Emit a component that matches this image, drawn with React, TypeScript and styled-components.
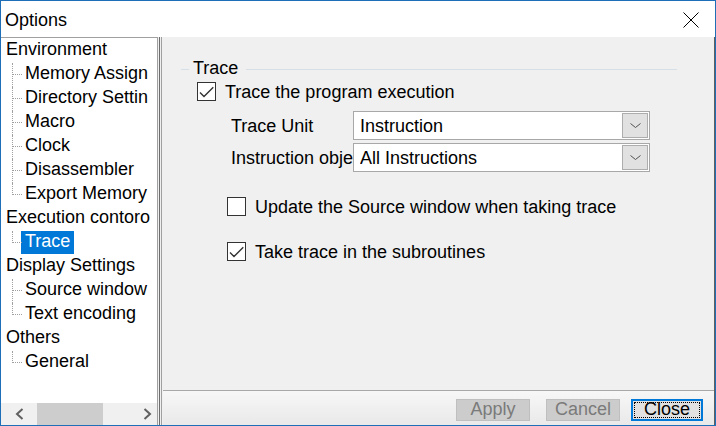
import React from "react";
import styled, { createGlobalStyle } from "styled-components";

const Global = createGlobalStyle`
  html, body { margin: 0; padding: 0; background: #ffffff; }
  body { font-family: "Liberation Sans", Arial, sans-serif; font-size: 18px; color: #000; }
  * { box-sizing: border-box; }
`;

const Window = styled.div`
  width: 716px;
  height: 426px;
  border: 1px solid #1e6fb7;
  display: flex;
  flex-direction: column;
  background: #f0f0f0;
  overflow: hidden;
`;

const TitleBar = styled.div`
  height: 36px;
  flex: none;
  background: #ffffff;
  display: flex;
  align-items: center;
  justify-content: space-between;
  padding: 1px 16px 0 4px;
  line-height: 20px;
`;

const TitleText = styled.span`
  font-size: 18px;
  color: #000;
`;

const Body = styled.div`
  flex: 1;
  display: flex;
  min-height: 0;
`;

const Tree = styled.div`
  width: 157px;
  flex: none;
  background: #ffffff;
  border-top: 1px solid #a0a0a0;
  border-right: 1px solid #a0a0a0;
  display: flex;
  flex-direction: column;
`;

const TreeList = styled.div`
  flex: 1;
  overflow: hidden;
  padding-top: 1px;
`;

const TreeRow = styled.div<{ $child?: boolean; $last?: boolean }>`
  position: relative;
  height: 24px;
  padding-left: ${(p) => (p.$child ? "20px" : "1px")};
  white-space: nowrap;
  overflow: hidden;
  ${(p) =>
    p.$child
      ? `
  &::before {
    content: "";
    position: absolute;
    left: 11px;
    top: 0;
    height: ${p.$last ? "12px" : "24px"};
    border-left: 1px dotted #a0a0a0;
  }
  &::after {
    content: "";
    position: absolute;
    left: 11px;
    top: 11px;
    width: 10px;
    border-top: 1px dotted #a0a0a0;
  }`
      : ""}
`;

const TreeLabel = styled.span<{ $selected?: boolean }>`
  display: inline-block;
  height: 23px;
  line-height: 20px;
  padding: 0 4px 3px 4px;
  background: ${(p) => (p.$selected ? "#0078d7" : "transparent")};
  color: ${(p) => (p.$selected ? "#ffffff" : "#000000")};
`;

const HScroll = styled.div`
  height: 22px;
  flex: none;
  background: #f0f0f0;
  display: grid;
  grid-template-columns: 36px 66px 1fr 20px;
  align-items: stretch;
`;

const ScrollArrow = styled.div`
  display: flex;
  align-items: center;
  justify-content: center;
`;

const ScrollThumb = styled.div`
  background: #cdcdcd;
`;

const Splitter = styled.div`
  width: 5px;
  flex: none;
  background: linear-gradient(
    to right,
    #f0f0f0 0 1px,
    #6d6d6d 1px 2px,
    #f0f0f0 2px 3px,
    #a0a0a0 3px 4px,
    #f0f0f0 4px
  );
`;

const Main = styled.div`
  flex: 1;
  display: flex;
  flex-direction: column;
  border-right: 1px solid #5f5f5f;
  background: #f0f0f0;
`;

const Content = styled.div`
  flex: 1;
  padding: 21px 37px 0 18px;
  display: flex;
  flex-direction: column;
`;

const GroupHeader = styled.div`
  display: flex;
  align-items: flex-start;
  height: 20px;
  line-height: 20px;
`;

const GroupLine = styled.div<{ $grow?: boolean }>`
  margin-top: 11px;
  height: 1px;
  background: #d5dfe5;
  width: ${(p) => (p.$grow ? "auto" : "8px")};
  flex: ${(p) => (p.$grow ? "1" : "none")};
`;

const GroupTitle = styled.span`
  padding: 0 8px 0 4px;
`;

const CheckRow = styled.label<{ $indent: number; $top: number }>`
  display: flex;
  align-items: flex-start;
  gap: 9px;
  height: 20px;
  line-height: 20px;
  margin-left: ${(p) => p.$indent}px;
  margin-top: ${(p) => p.$top}px;
  white-space: nowrap;
`;

const CheckBox = styled.span`
  width: 19px;
  height: 19px;
  flex: none;
  border: 1px solid #333333;
  background: #ffffff;
  display: flex;
  align-items: center;
  justify-content: center;
`;

const FieldGrid = styled.div`
  display: grid;
  grid-template-columns: 122px 297px;
  row-gap: 3px;
  margin-left: 50px;
  margin-top: 9px;
  align-items: center;
`;

const FieldLabel = styled.span`
  line-height: 20px;
  white-space: nowrap;
  overflow: hidden;
`;

const Select = styled.div`
  height: 29px;
  border: 1px solid #a8a8a8;
  background: #ffffff;
  display: flex;
  align-items: stretch;
  padding: 1px 1px 1px 6px;
  line-height: 20px;
`;

const SelectValue = styled.span`
  flex: 1;
  display: flex;
  align-items: center;
  white-space: nowrap;
  overflow: hidden;
`;

const DropButton = styled.span`
  width: 26px;
  flex: none;
  border: 1px solid #adadad;
  background: #e1e1e1;
  display: flex;
  align-items: center;
  justify-content: center;
`;

const ButtonBar = styled.div`
  height: 35px;
  flex: none;
  border-top: 1px solid #a8a8a8;
  background: linear-gradient(to bottom, #f7f7f7, #e9e9e9);
  display: flex;
  justify-content: flex-end;
  align-items: flex-start;
  padding: 8px 11px 0 0;
  gap: 11px;
`;

const Button = styled.div<{ $disabled?: boolean; $default?: boolean; $w: number; $after?: number }>`
  position: relative;
  width: ${(p) => p.$w}px;
  height: 22px;
  margin-right: ${(p) => p.$after ?? 0}px;
  border: ${(p) => (p.$default ? "2px solid #0078d7" : "1px solid #bfbfbf")};
  background: ${(p) => (p.$default ? "#e1e1e1" : "#cccccc")};
  color: ${(p) => (p.$disabled ? "#7a7a7a" : "#000000")};
  text-align: center;
  line-height: ${(p) => (p.$default ? "16px" : "18px")};
  overflow: hidden;
  ${(p) =>
    p.$default
      ? `
  &::after {
    content: "";
    position: absolute;
    inset: 1px;
    border: 1px dotted #000;
  }`
      : ""}
`;

type Item = { t: string; child?: boolean; last?: boolean; selected?: boolean };

const items: Item[] = [
  { t: "Environment" },
  { t: "Memory Assign", child: true },
  { t: "Directory Settin", child: true },
  { t: "Macro", child: true },
  { t: "Clock", child: true },
  { t: "Disassembler", child: true },
  { t: "Export Memory", child: true, last: true },
  { t: "Execution contoro" },
  { t: "Trace", child: true, last: true, selected: true },
  { t: "Display Settings" },
  { t: "Source window", child: true },
  { t: "Text encoding", child: true, last: true },
  { t: "Others" },
  { t: "General", child: true, last: true },
];

const Check = () => (
  <svg width="17" height="17" viewBox="0 0 17 17">
    <polyline points="2,9.5 6,13.5 15.3,4.3" fill="none" stroke="#333" strokeWidth="1.4" />
  </svg>
);

const Chevron = () => (
  <svg width="11" height="5" viewBox="0 0 11 5">
    <polyline points="0.5,0.5 5.5,4.5 10.5,0.5" fill="none" stroke="#505050" strokeWidth="1" />
  </svg>
);

export default function App() {
  return (
    <>
      <Global />
      <Window>
        <TitleBar>
          <TitleText>Options</TitleText>
          <svg width="16" height="16" viewBox="0 0 16 16">
            <line x1="0.5" y1="0.5" x2="15.5" y2="15.5" stroke="#000" strokeWidth="1" />
            <line x1="15.5" y1="0.5" x2="0.5" y2="15.5" stroke="#000" strokeWidth="1" />
          </svg>
        </TitleBar>
        <Body>
          <Tree>
            <TreeList>
              {items.map((it) => (
                <TreeRow key={it.t} $child={it.child} $last={it.last}>
                  <TreeLabel $selected={it.selected}>{it.t}</TreeLabel>
                </TreeRow>
              ))}
            </TreeList>
            <HScroll>
              <ScrollArrow>
                <svg width="9" height="12" viewBox="0 0 9 12">
                  <polyline points="7.5,1 2,6 7.5,11" fill="none" stroke="#606060" strokeWidth="2" />
                </svg>
              </ScrollArrow>
              <ScrollThumb />
              <span />
              <ScrollArrow>
                <svg width="9" height="12" viewBox="0 0 9 12">
                  <polyline points="1.5,1 7,6 1.5,11" fill="none" stroke="#606060" strokeWidth="2" />
                </svg>
              </ScrollArrow>
            </HScroll>
          </Tree>
          <Splitter />
          <Main>
            <Content>
              <GroupHeader>
                <GroupLine />
                <GroupTitle>Trace</GroupTitle>
                <GroupLine $grow />
              </GroupHeader>
              <CheckRow $indent={16} $top={4}>
                <CheckBox>
                  <Check />
                </CheckBox>
                <span>Trace the program execution</span>
              </CheckRow>
              <FieldGrid>
                <FieldLabel>Trace Unit</FieldLabel>
                <Select>
                  <SelectValue>Instruction</SelectValue>
                  <DropButton>
                    <Chevron />
                  </DropButton>
                </Select>
                <FieldLabel>Instruction object</FieldLabel>
                <Select>
                  <SelectValue>All Instructions</SelectValue>
                  <DropButton>
                    <Chevron />
                  </DropButton>
                </Select>
              </FieldGrid>
              <CheckRow $indent={46} $top={25}>
                <CheckBox />
                <span>Update the Source window when taking trace</span>
              </CheckRow>
              <CheckRow $indent={46} $top={25}>
                <CheckBox>
                  <Check />
                </CheckBox>
                <span>Take trace in the subroutines</span>
              </CheckRow>
            </Content>
            <ButtonBar>
              <Button $disabled $w={74} $after={5}>Apply</Button>
              <Button $disabled $w={74}>Cancel</Button>
              <Button $default $w={72}>Close</Button>
            </ButtonBar>
          </Main>
        </Body>
      </Window>
    </>
  );
}
